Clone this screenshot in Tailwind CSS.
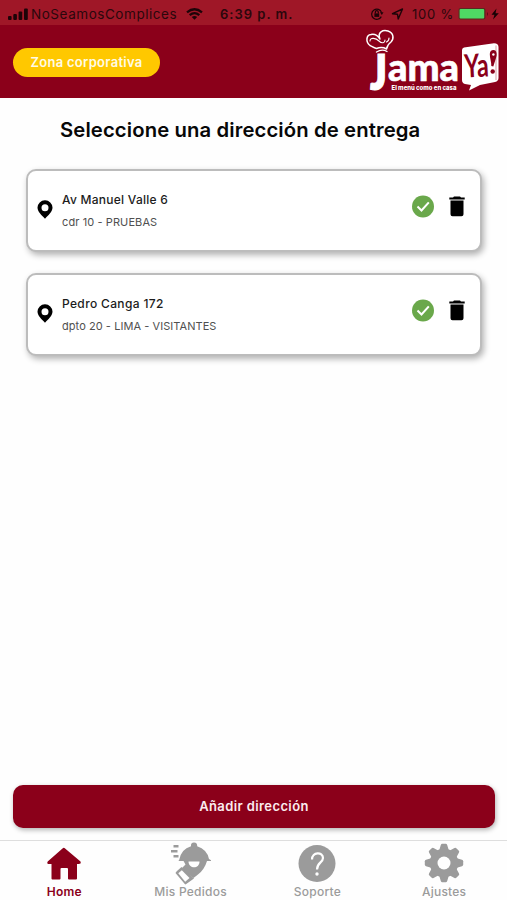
<!DOCTYPE html>
<html lang="es">
<head>
<meta charset="utf-8">
<title>Jama Ya</title>
<script src="https://cdn.jsdelivr.net/npm/@tailwindcss/browser@4"></script>
</head>
<body class="bg-white">
<div class="flex flex-col w-[507px] h-[900px] overflow-hidden bg-[#fefefe] font-['Inter','Liberation_Sans',sans-serif] whitespace-nowrap">
  <div class="h-[25px] shrink-0 bg-[#9f1727] text-[#2b070c] flex items-center pt-[3px] text-[13px] leading-[20px]">
    <svg class="ml-2 w-[20px] h-[12px]" viewBox="0 0 20 12" fill="#1d0408"><rect x="0" y="8" width="3.6" height="4" rx="1"/><rect x="5.3" y="6" width="3.6" height="6" rx="1"/><rect x="10.6" y="3.5" width="3.6" height="8.5" rx="1"/><rect x="16" y="0.5" width="3.8" height="11.5" rx="1"/></svg>
    <span class="ml-[3px] w-[147px] text-[13.5px] tracking-[0.55px]">NoSeamosComplices</span>
    <svg class="ml-[8px] w-[17px] h-[12px]" viewBox="0 0 17 12" fill="none" stroke="#1d0408" stroke-width="2.3"><path d="M1 4.4Q8.500 -1.800 16 4.400M3.700 7.200Q8.500 3 13.300 7.200"/><path d="M5.800 8.900Q8.500 7 11.200 8.900L8.500 11.800Z" fill="#1d0408" stroke="none"/></svg>
    <span class="ml-[17px] w-[74px] font-semibold tracking-[1px]">6:39 p. m.</span>
    <svg class="ml-[76px] w-[14px] h-[12px]" viewBox="0 0 14 12" fill="none" stroke="#1d0408" stroke-width="1.2"><path d="M11.300 8.600A5.100 5.100 0 1 1 11.600 4.600"/><path d="M10 4.300h3.500L11.800 7z" fill="#1d0408" stroke="none"/><rect x="4.400" y="5.400" width="4.800" height="3.500" fill="#1d0408" stroke="none"/><path d="M5.300 5.600V4.200a1.500 1.500 0 0 1 3 0v1.400"/></svg>
    <svg class="ml-[7px] w-[13px] h-[12px]" viewBox="0 0 13 12" fill="none" stroke="#1d0408" stroke-width="1.400" stroke-linejoin="round"><path d="M1.500 5.700L11.500 1L7.200 11L6.500 6.200Z"/></svg>
    <span class="ml-[8px] w-[43px] tracking-[0.8px]">100 %</span>
    <svg class="ml-[3px] w-[46px] h-[14px]" viewBox="0 0 46 14"><rect x=".5" y="1" width="27" height="11.500" rx="2" fill="#5a2a20"/><rect x="1.600" y="2" width="24.600" height="9.500" rx="1" fill="#4fd964"/><path d="M29 5q2 2 0 4z" fill="#5b0b16"/><path d="M38.500 1.500L33.500 7.800H36.500L35 12.500L40.800 6.200H37.500Z" fill="#140204"/></svg>
  </div>
  <header class="h-[73px] shrink-0 bg-[#8b001a] flex items-start justify-between pl-[13px] pr-[3px]">
    <div class="mt-[23px] w-[147px] h-[29px] rounded-full bg-[#ffc800] text-[#fffbe6] font-semibold text-[13px] tracking-[0.3px] flex items-center justify-center">Zona corporativa</div>
    <svg class="w-[140px] h-[70px] overflow-visible" viewBox="364 25 140 70">
      <g fill="none" stroke="#fff" stroke-width="1.500" stroke-linejoin="round" stroke-linecap="round">
        <path d="M376.500 48.500C374 48 372 46.500 370 45.500C365.500 42 366 35 371 34.500C375 33.500 378 36 380 39C377 32 383 29.500 388 31C394 33 394 39 391 42C388 44 387 46.500 386.500 49Q382 46.500 376.500 48.500Z"/>
        <path d="M370 41C370 37 376 38 379 41C382 44 385 43 385 40M389 38Q389 41 386.500 42" stroke-width="1.100"/>
        <path d="M376.500 52Q382 48.500 387 51.500" stroke-width="1.400"/>
      </g>
      <g fill="#fff" stroke="#fff" font-family="Inter, Liberation Sans, sans-serif">
        <text x="370" y="89.500" font-family="Lato, sans-serif" font-weight="800" font-size="49" textLength="17" lengthAdjust="spacingAndGlyphs" stroke-width="1">J</text>
        <text x="388" y="81" font-family="Lato, sans-serif" font-weight="900" font-size="37" textLength="71" lengthAdjust="spacingAndGlyphs" stroke-width=".6">ama</text>
        <text x="391.500" y="90" font-weight="800" font-size="6.500" textLength="65" lengthAdjust="spacingAndGlyphs" stroke-width="0">El menú como en casa</text>
      </g>
      <path d="M464 47.500L494 43.200Q498.500 43.500 498.500 47V78Q498.500 81 495 82L480 85L469 90.500L471 85L465 84Q462 83 462 80V50Q462 48 464 47.500Z" fill="#fff"/>
      <path d="M496 45.500V80" stroke="#c67582" stroke-width=".7"/>
      <text x="464.500" y="77" font-family="Lato, sans-serif" font-weight="700" font-size="32" textLength="24" lengthAdjust="spacingAndGlyphs" fill="#8b001a" transform="rotate(-3 475 66)">Ya</text>
      <path d="M493.500 50C497 50 497.300 55 496 58L493.300 66.500L491.300 66C491.500 62 489.700 58 489.800 54Q490 50 493.500 50Z" fill="#8b001a"/><circle cx="493.400" cy="54.500" r="1.200" fill="#fff"/><circle cx="492.700" cy="71.500" r="2.200" fill="#8b001a"/>
    </svg>
  </header>
  <main class="flex-1 flex flex-col">
    <h1 class="mt-[18px] ml-[60px] h-[27px] leading-[27px] text-[20.300px] font-semibold tracking-[0.110px] text-[#080808]">Seleccione una dirección de entrega</h1>
    <section class="mt-[26px] ml-[26px] w-[456px] flex flex-col gap-[21px]">
      <article class="h-[83px] rounded-[10px] border-2 border-[#bcbcbc] bg-white shadow-[2px_3px_6px_rgba(0,0,0,0.3)] flex items-start">
        <svg class="ml-[9px] mt-[29px] w-[16px] h-[19px]" viewBox="0 0 16 19"><path fill="#000" fill-rule="evenodd" d="M8 .3A7.400 7.400 0 0 0 .5 7.600C.5 11.500 4.500 15.500 8 18.700C11.500 15.500 15.500 11.500 15.500 7.600A7.400 7.400 0 0 0 8 .3ZM8 4.200A3.500 3.500 0 1 1 8 11.200A3.500 3.500 0 0 1 8 4.200Z"/></svg>
        <div class="ml-[9px] mt-[18px] flex-1">
          <p class="h-[22px] leading-[22px] text-[12px] font-medium tracking-[0.25px] text-[#1c1c1c]">Av Manuel Valle 6</p>
          <p class="h-[22px] leading-[23px] text-[11px] tracking-[0.1px] text-[#505050]">cdr 10 - PRUEBAS</p>
        </div>
        <svg class="mt-[24px] w-[23px] h-[23px]" viewBox="0 0 23 23"><circle cx="11" cy="11.500" r="11" fill="#6aa84b"/><path d="M5.500 11.500L9.500 15.500L16.800 7.300" fill="none" stroke="#fff" stroke-width="2"/></svg>
        <svg class="ml-[14px] mr-[15px] mt-[25px] w-[16px] h-[21px]" viewBox="0 0 16 21"><path d="M5 .5h6l1 1h3.700v2H.3v-2H4zM1.500 4.500h13v13.700a2 2 0 0 1-2 2h-9a2 2 0 0 1-2-2z"/></svg>
      </article>
      <article class="h-[83px] rounded-[10px] border-2 border-[#bcbcbc] bg-white shadow-[2px_3px_6px_rgba(0,0,0,0.3)] flex items-start">
        <svg class="ml-[9px] mt-[29px] w-[16px] h-[19px]" viewBox="0 0 16 19"><path fill="#000" fill-rule="evenodd" d="M8 .3A7.400 7.400 0 0 0 .5 7.600C.5 11.500 4.500 15.500 8 18.700C11.500 15.500 15.500 11.500 15.500 7.600A7.400 7.400 0 0 0 8 .3ZM8 4.200A3.500 3.500 0 1 1 8 11.200A3.500 3.500 0 0 1 8 4.200Z"/></svg>
        <div class="ml-[9px] mt-[18px] flex-1">
          <p class="h-[22px] leading-[22px] text-[12px] font-medium tracking-[0.35px] text-[#1c1c1c]">Pedro Canga 172</p>
          <p class="h-[22px] leading-[23px] text-[11px] tracking-[0.06px] text-[#505050]">dpto 20 - LIMA - VISITANTES</p>
        </div>
        <svg class="mt-[24px] w-[23px] h-[23px]" viewBox="0 0 23 23"><circle cx="11" cy="11.500" r="11" fill="#6aa84b"/><path d="M5.500 11.500L9.500 15.500L16.800 7.300" fill="none" stroke="#fff" stroke-width="2"/></svg>
        <svg class="ml-[14px] mr-[15px] mt-[25px] w-[16px] h-[21px]" viewBox="0 0 16 21"><path d="M5 .5h6l1 1h3.700v2H.3v-2H4zM1.500 4.500h13v13.700a2 2 0 0 1-2 2h-9a2 2 0 0 1-2-2z"/></svg>
      </article>
    </section>
    <button class="mt-auto mb-[12px] ml-[13px] w-[482px] h-[43px] rounded-[10px] bg-[#8b001a] text-[#fbecef] text-[13px] font-semibold tracking-[0.4px] shadow-[1px_2px_5px_rgba(0,0,0,0.3)]">Añadir dirección</button>
  </main>
  <nav class="h-[60px] shrink-0 border-t border-[#dedede] grid grid-cols-4 text-[12px] font-medium tracking-[0.25px] text-[#9b9b9b]">
    <div class="flex flex-col items-center text-[#8b001a] font-semibold">
      <svg class="mt-[1px] w-[42px] h-[42px]" viewBox="0 0 42 42"><path d="M20.500 6.400Q21.800 5.200 23.100 6.400L38.500 19.500Q39.500 22 36.500 22H35V36.500Q35 37.500 34 37.500H27Q26 37.500 26 36.500V27Q26 26 25 26H19.500Q18.500 26 18.500 27V36.500Q18.500 37.500 17.500 37.500H10.500Q9.500 37.500 9.500 36.500V22H6.500Q4.500 21.500 5.700 19.500Z" fill="#8b001a"/></svg>
      <span class="ml-[2px] h-[16px] leading-[16px]">Home</span>
    </div>
    <div class="flex flex-col items-center">
      <svg class="mt-[1px] w-[42px] h-[42px] overflow-visible" viewBox="0 0 42 42" fill="#9b9b9b"><path d="M10 18.600Q12 7 22 4.300Q21.500.6 25 .4Q28.500.6 28.200 4.300Q38 7.500 40 17L42 18.300V19H9Z"/><path d="M4.500 3h5v2.500h-5zM2 8h6.500v2.500H2zM4.500 13h5v2.500h-5z"/><path fill-rule="evenodd" d="M14.500 19H38C36.500 24.500 33 29.500 29 32.500L24.500 36L12 27L16.500 22.500ZM19.500 19.500C19.500 27 30.500 27.500 30.500 19.500Z"/><path d="M12.500 25L25 36.500L16.500 42.500Q15.500 42 14.500 40.500L6.500 31Q7 30 8 29Z"/><path d="M12.800 28.200L20.500 36L16.200 39.700L9.300 31.300Z" fill="#fefefe"/></svg>
      <span class="ml-[1px] h-[16px] leading-[16px]">Mis Pedidos</span>
    </div>
    <div class="flex flex-col items-center">
      <svg class="mt-[1px] w-[42px] h-[42px]" viewBox="0 0 42 42"><circle cx="21" cy="21.500" r="18.500" fill="#9b9b9b"/><path d="M16 17.500C16 9.500 27 9.500 27 16C27 20.500 21 20.500 21 27.500" fill="none" stroke="#fff" stroke-width="2.200"/><circle cx="21" cy="32" r="1.700" fill="#fff"/></svg>
      <span class="ml-[1px] h-[16px] leading-[16px]">Soporte</span>
    </div>
    <div class="flex flex-col items-center">
      <svg class="mt-[1px] w-[42px] h-[42px]" viewBox="0 0 42 42"><g transform="translate(21 21)" fill="#9b9b9b"><path id="cog" d="M-5 -12L-3.200 -18Q-2.800 -19.200 -1.800 -19.200H1.800Q2.800 -19.200 3.200 -18L5 -12V12L3.200 18Q2.800 19.200 1.800 19.200H-1.800Q-2.800 19.200 -3.200 18L-5 12Z"/><use href="#cog" transform="rotate(45)"/><use href="#cog" transform="rotate(90)"/><use href="#cog" transform="rotate(135)"/><circle r="14.300"/><circle r="6.500" fill="#fefefe"/></g></svg>
      <span class="ml-[1px] h-[16px] leading-[16px]">Ajustes</span>
    </div>
  </nav>
</div>
</body>
</html>
